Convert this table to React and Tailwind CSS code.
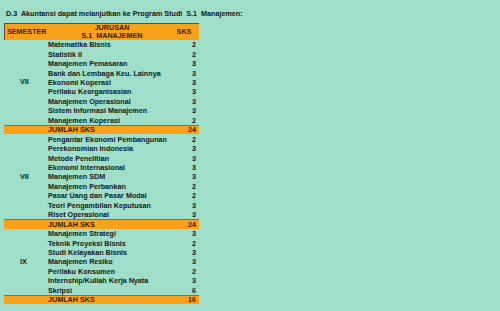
export default function App() {
  const blocks = [
    {
      sem: "VII",
      rows: [
        ["Matematika Bisnis", 2],
        ["Statistik II", 2],
        ["Manajemen Pemasaran", 3],
        ["Bank dan Lembaga Keu. Lainnya", 3],
        ["Ekonomi Koperasi", 3],
        ["Perilaku Keorganisasian", 3],
        ["Manajemen Operasional", 3],
        ["Sistem Informasi Manajemen", 3],
        ["Manajemen Koperasi", 2],
      ],
      total: 24,
    },
    {
      sem: "VII",
      rows: [
        ["Pengantar Ekonomi Pembangunan", 2],
        ["Perekonomian Indonesia", 3],
        ["Metode Penelitian", 3],
        ["Ekonomi Internasional", 3],
        ["Manajemen SDM", 3],
        ["Manajemen Perbankan", 2],
        ["Pasar Uang dan Pasar Modal", 2],
        ["Teori Pengambilan Keputusan", 3],
        ["Riset Operasional", 3],
      ],
      total: 24,
    },
    {
      sem: "IX",
      rows: [
        ["Manajemen Strategi", 3],
        ["Teknik Proyeksi Bisnis", 2],
        ["Studi Kelayakan Bisnis", 3],
        ["Manajemen Resiko", 3],
        ["Perilaku Konsumen", 2],
        ["Internship/Kuliah Kerja Nyata", 3],
        ["Skripsi", 6],
      ],
      total: 16,
    },
  ];
  return (
    <div className="w-[500px] h-[311px] overflow-hidden bg-[#9fdfca] font-['Liberation_Sans',sans-serif] font-bold text-[#101820] text-[7.2px]">
      <div className="pt-[9px] pl-[6px] h-[23px] text-[7.2px] leading-[9px] whitespace-pre">
        {"D.3  Akuntansi dapat melanjutkan ke Program Studi  S.1  Manajemen:"}
      </div>
      <div className="ml-[4px] w-[195px]">
        <div className="flex h-[17px] bg-[#f8a21c] border-t border-l border-[#7a4a10] text-[#3a1c00]">
          <div className="w-[44px] pl-[2px] flex items-center">SEMESTER</div>
          <div className="flex-1 flex flex-col items-center justify-center leading-[8px] pl-[6px]">
            <div>JURUSAN</div>
            <div className="whitespace-pre">{"S.1  MANAJEMEN"}</div>
          </div>
          <div className="w-[30px] flex items-center justify-center">SKS</div>
        </div>
        {blocks.map((b, i) => (
          <div key={i}>
            <div className="flex">
              <div className="w-[44px] flex items-center pl-[16px]">{b.sem}</div>
              <div className="flex-1 flex flex-col">
                {b.rows.map(([n, s], j) => (
                  <div key={j} className="flex h-[9.45px] items-center leading-[9px]">
                    <div className="flex-1 whitespace-nowrap">{n}</div>
                    <div className="pr-[3px]">{s}</div>
                  </div>
                ))}
              </div>
            </div>
            <div className="flex h-[9.5px] items-center bg-[#f8a21c] border-t border-[#9a6a20] text-[#3a1c00] leading-[8px]">
              <div className="pl-[44px] flex-1">JUMLAH SKS</div>
              <div className="pr-[3px]">{b.total}</div>
            </div>
          </div>
        ))}
      </div>
    </div>
  );
}
